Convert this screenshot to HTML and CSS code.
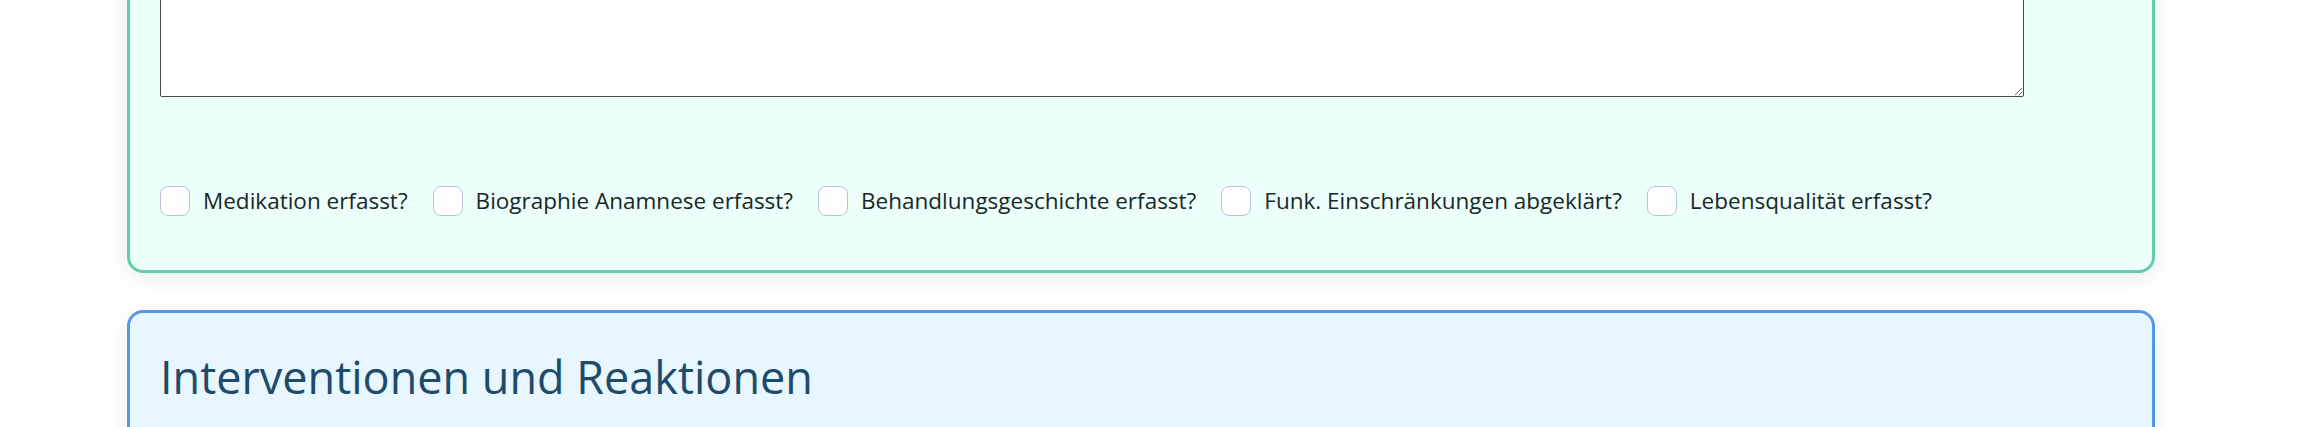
FILE: index.html
```html
<!DOCTYPE html>
<html lang="de">
<head>
    <meta charset="UTF-8">
    <meta name="viewport" content="width=device-width, initial-scale=1.0">
    <title>Pflegedokumentation</title>
    <link rel="stylesheet" href="styles.css">
</head>
<body>
    <div class="page">
        <section class="card card-assessment">
            <textarea class="notes" rows="6"></textarea>

            <div class="checks">
                <label class="check"><input type="checkbox"> Medikation erfasst?</label>
                <label class="check"><input type="checkbox"> Biographie Anamnese erfasst?</label>
                <label class="check"><input type="checkbox"> Behandlungsgeschichte erfasst?</label>
                <label class="check"><input type="checkbox"> Funk. Einschränkungen abgeklärt?</label>
                <label class="check"><input type="checkbox"> Lebensqualität erfasst?</label>
            </div>
        </section>

        <section class="card card-interventions">
            <h2>Interventionen und Reaktionen</h2>
            <textarea class="notes" rows="6"></textarea>
        </section>
    </div>
</body>
</html>
```

FILE: styles.css
```css
body {
    margin: 0;
    background: #fff;
    font-family: 'Open Sans', 'Noto Sans', sans-serif;
    color: #182828;
    overflow: hidden;
}

.page {
    width: 2028px;
    margin-left: 127px;
    margin-top: -262px;
}

.card {
    border: 3px solid;
    border-radius: 16px;
    padding: 30px;
    margin-bottom: 37px;
    box-shadow: 0 6px 24px rgba(0, 0, 0, 0.08);
}

.card-assessment {
    background: #edfffa;
    border-color: #5fcfad;
}

.card-interventions {
    background: #e7f6ff;
    border-color: #5598e6;
}

h2 {
    margin: 0 0 40px;
    font-size: 45px;
    font-weight: 400;
    line-height: 1.2;
    color: #1f4b6a;
    padding-top: 7px;
}

.notes {
    display: block;
    width: 95%;
    height: 326px;
    box-sizing: border-box;
    border: 1px solid #4a4a4a;
    border-radius: 2px;
    background: #fff;
    margin-bottom: 88px;
}

.checks {
    display: flex;
    flex-wrap: wrap;
    align-items: center;
    gap: 25px;
    margin-bottom: 24px;
}

.check {
    display: flex;
    align-items: center;
    gap: 13px;
    font-size: 22.5px;
    line-height: 31px;
}

.check input {
    appearance: none;
    -webkit-appearance: none;
    width: 30px;
    height: 30px;
    margin: 0;
    background: #fff;
    border: 1.5px solid #bcc0e8;
    border-radius: 8px;
}
```
